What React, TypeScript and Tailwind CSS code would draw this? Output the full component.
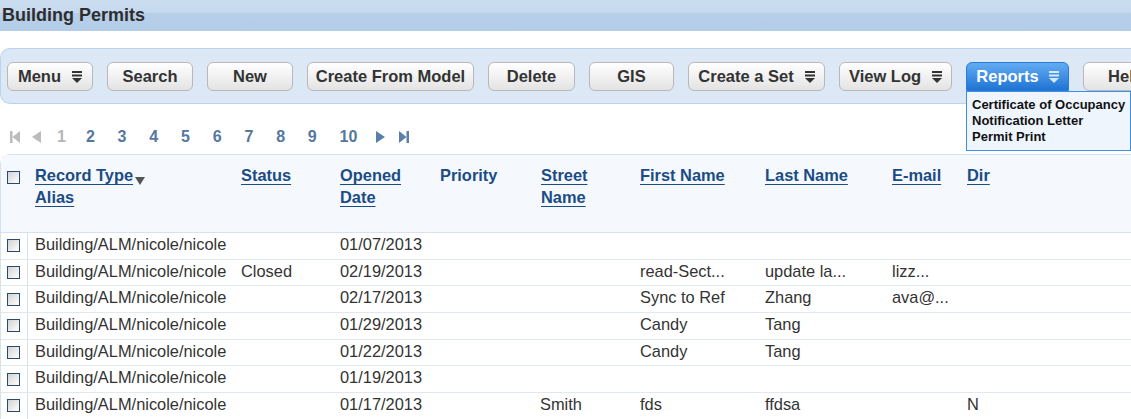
import React from 'react';

interface Row {
  status?: string;
  opened: string;
  street?: string;
  first?: string;
  last?: string;
  email?: string;
  dir?: string;
}

const rows: Row[] = [
  { opened: '01/07/2013' },
  { status: 'Closed', opened: '02/19/2013', first: 'read-Sect...', last: 'update la...', email: 'lizz...' },
  { opened: '02/17/2013', first: 'Sync to Ref', last: 'Zhang', email: 'ava@...' },
  { opened: '01/29/2013', first: 'Candy', last: 'Tang' },
  { opened: '01/22/2013', first: 'Candy', last: 'Tang' },
  { opened: '01/19/2013' },
  { opened: '01/17/2013', street: 'Smith', first: 'fds', last: 'ffdsa', dir: 'N' },
];

// column widths, first one holds the checkboxes (left border eats 1px)
const cols = 'grid grid-cols-[27px_206px_99px_100px_101px_99px_125px_127px_75px_1fr]';

const MenuIcon = ({ color = '#333333' }: { color?: string }) => (
  <svg width="10" height="12" viewBox="0 0 10 12" fill={color}>
    <rect x="0" y="0" width="10" height="2" />
    <rect x="0" y="3.5" width="10" height="2" />
    <polygon points="0,7 10,7 5,12" />
  </svg>
);

const Checkbox = () => (
  <div className="w-[13px] h-[13px] border border-[#284a72] bg-[linear-gradient(135deg,#d2d2d2,#ffffff)]" />
);

const Button = ({ label, width, menu }: { label: string; width: string; menu?: boolean }) => (
  <div
    className={`${width} h-[29px] shrink-0 flex items-center justify-center gap-[11px] rounded-[6px] border border-[#b8b8b8] bg-[linear-gradient(#ffffff,#e3e3e3)] text-[16.5px] font-bold text-[#333333] whitespace-nowrap`}
  >
    <span>{label}</span>
    {menu && <MenuIcon />}
  </div>
);

const Arrow = ({ dir, color, bar }: { dir: 'left' | 'right'; color: string; bar?: boolean }) => (
  <svg width={bar ? 10 : 9} height="12" viewBox={bar ? '0 0 10 12' : '0 0 9 12'} fill={color}>
    {dir === 'left' && bar && (
      <>
        <rect x="0" y="0" width="2.5" height="12" />
        <polygon points="10,0 10,12 2.5,6" />
      </>
    )}
    {dir === 'left' && !bar && <polygon points="9,0 9,12 0,6" />}
    {dir === 'right' && !bar && <polygon points="0,0 0,12 9,6" />}
    {dir === 'right' && bar && (
      <>
        <polygon points="0,0 0,12 7.5,6" />
        <rect x="7.5" y="0" width="2.5" height="12" />
      </>
    )}
  </svg>
);

const HeadLink = ({ children }: { children: React.ReactNode }) => (
  <span className="underline underline-offset-[3px]">{children}</span>
);

export default function App() {
  return (
    <div className="w-[1131px] h-[419px] overflow-hidden bg-white font-['Liberation_Sans',Arial,sans-serif] text-[#333333]">
      {/* title bar */}
      <div className="h-[31px] pl-[2px] pt-[5px] bg-[linear-gradient(#cadcf0_0%,#c6daef_40%,#b7cfe9_42%,#b4cde8_100%)] text-[18px] leading-[21px] font-bold text-[#2e2e2e]">
        Building Permits
      </div>

      {/* toolbar */}
      <div className="mt-[17px] h-[56px] flex items-start gap-[14px] pl-[6px] pt-[13px] rounded-tl-[10px] rounded-bl-[10px] border border-r-0 border-[#bcd3ec] bg-[#dce8f5]">
        <Button label="Menu" width="w-[86px]" menu />
        <Button label="Search" width="w-[86px]" />
        <Button label="New" width="w-[86px]" />
        <Button label="Create From Model" width="w-[167px]" />
        <Button label="Delete" width="w-[87px]" />
        <Button label="GIS" width="w-[85px]" />
        <Button label="Create a Set" width="w-[137px]" menu />
        <Button label="View Log" width="w-[113px]" menu />
        <div className="relative w-[103px] shrink-0">
          <div className="h-[29px] flex items-center justify-center gap-[10px] rounded-t-[6px] border border-[#2a7bd6] bg-[linear-gradient(#62acf2,#1f73d3)] text-[16.5px] font-bold text-white">
            <span>Reports</span>
            <MenuIcon color="#d6e9ff" />
          </div>
          <div className="absolute left-0 top-full z-10 w-[165px] h-[60px] border border-[#3d8fe5] bg-[#eef5fd] pl-[5px] pt-[5px] text-[13px] leading-[16px] font-bold text-[#111111] whitespace-nowrap">
            <div>Certificate of Occupancy</div>
            <div>Notification Letter</div>
            <div>Permit Print</div>
          </div>
        </div>
        <Button label="Help" width="w-[86px]" />
      </div>

      {/* pagination */}
      <div className="mt-[22px] h-[22px] flex items-center pl-[10px] text-[16px] font-bold text-[#5577a0]">
        <Arrow dir="left" bar color="#bcbcbc" />
        <span className="ml-[12px] flex"><Arrow dir="left" color="#bcbcbc" /></span>
        <span className="ml-[16px] text-[#b5b5b5]">1</span>
        {['2', '3', '4', '5', '6', '7', '8', '9', '10'].map((n, i) => (
          <span key={n} className={i === 0 ? 'ml-[20px]' : 'ml-[22.8px]'}>
            {n}
          </span>
        ))}
        <span className="ml-[19px] flex"><Arrow dir="right" color="#5a7fa8" /></span>
        <span className="ml-[14px] flex"><Arrow dir="right" bar color="#5a7fa8" /></span>
      </div>

      {/* table */}
      <div className="mt-[6px] rounded-tl-[10px] border-t border-l border-[#d5e2f0]">
        <div className={`${cols} h-[78px] bg-[#f5f9fe] border-b border-[#d8e2ee] text-[16.4px] leading-[22px] font-bold text-[#1b4c85]`}>
          <div className="pl-[6px] pt-[16px]">
            <Checkbox />
          </div>
          <div className="pl-[7px] pt-[9px] whitespace-nowrap">
            <HeadLink>Record Type</HeadLink>
            <svg className="inline-block ml-[2px] relative top-[4px]" width="10" height="8" viewBox="0 0 10 8" fill="#555555">
              <polygon points="0,0 10,0 5,8" />
            </svg>
            <br />
            <HeadLink>Alias</HeadLink>
          </div>
          <div className="pl-[7px] pt-[9px]">
            <HeadLink>Status</HeadLink>
          </div>
          <div className="pl-[7px] pt-[9px]">
            <HeadLink>Opened</HeadLink>
            <br />
            <HeadLink>Date</HeadLink>
          </div>
          <div className="pl-[7px] pt-[9px]">Priority</div>
          <div className="pl-[7px] pt-[9px]">
            <HeadLink>Street</HeadLink>
            <br />
            <HeadLink>Name</HeadLink>
          </div>
          <div className="pl-[7px] pt-[9px] whitespace-nowrap">
            <HeadLink>First Name</HeadLink>
          </div>
          <div className="pl-[7px] pt-[9px] whitespace-nowrap">
            <HeadLink>Last Name</HeadLink>
          </div>
          <div className="pl-[7px] pt-[9px]">
            <HeadLink>E-mail</HeadLink>
          </div>
          <div className="pl-[7px] pt-[9px]">
            <HeadLink>Dir</HeadLink>
          </div>
        </div>

        {rows.map((r, i) => (
          <div
            key={i}
            className={`${cols} h-[26.67px] border-b border-[#e2e8f0] text-[16.4px] leading-[22px] text-[#333333] whitespace-nowrap`}
          >
            <div className="flex items-center pl-[6px] border-r border-[#d3e2f2]">
              <Checkbox />
            </div>
            <div className="pl-[7px]">Building/ALM/nicole/nicole</div>
            <div className="pl-[7px]">{r.status}</div>
            <div className="pl-[7px]">{r.opened}</div>
            <div className="pl-[7px]"></div>
            <div className="pl-[6px]">{r.street}</div>
            <div className="pl-[7px]">{r.first}</div>
            <div className="pl-[7px]">{r.last}</div>
            <div className="pl-[7px]">{r.email}</div>
            <div className="pl-[7px]">{r.dir}</div>
          </div>
        ))}
      </div>
    </div>
  );
}
